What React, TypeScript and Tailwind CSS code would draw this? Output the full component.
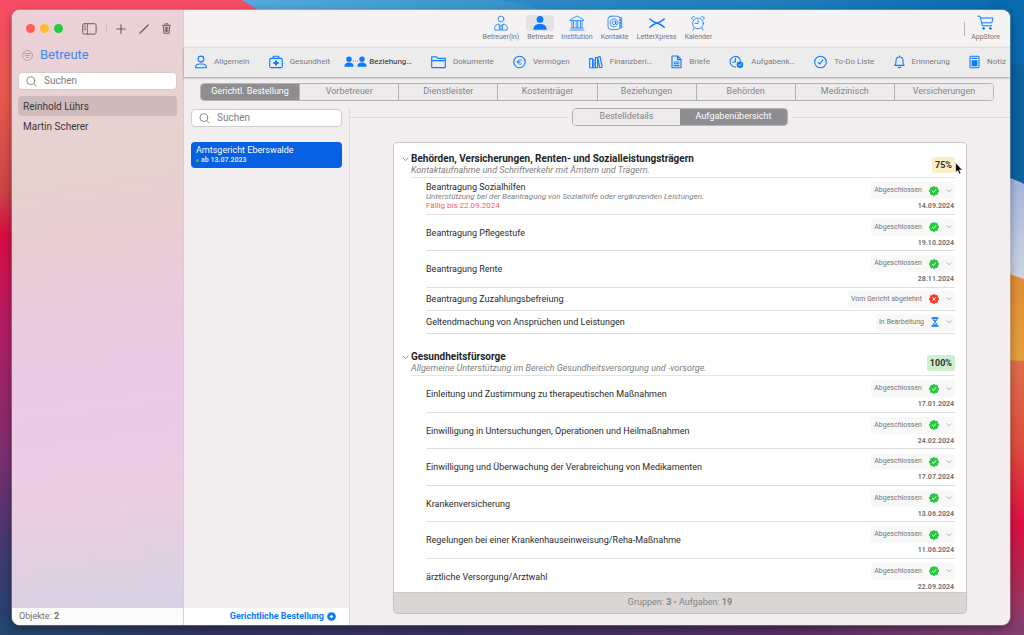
import { useState } from 'react';
import type { ReactNode } from 'react';

type Status = 'Abgeschlossen' | 'Vom Gericht abgelehnt' | 'In Bearbeitung';

type Task = {
  title: string;
  note?: string;
  due?: string;
  status: Status;
  date?: string;
};

type Group = {
  title: string;
  description: string;
  progress: string;
  badge: string;
  tasks: Task[];
};

const groups: Group[] = [
  {
    title: 'Behörden, Versicherungen, Renten- und Sozialleistungsträgern',
    description: 'Kontaktaufnahme und Schriftverkehr mit Ämtern und Trägern.',
    progress: '75%',
    badge: 'bg-[#fdeec6]',
    tasks: [
      {
        title: 'Beantragung Sozialhilfen',
        note: 'Unterstützung bei der Beantragung von Sozialhilfe oder ergänzenden Leistungen.',
        due: 'Fällig bis 22.09.2024',
        status: 'Abgeschlossen',
        date: '14.09.2024',
      },
      { title: 'Beantragung Pflegestufe', status: 'Abgeschlossen', date: '19.10.2024' },
      { title: 'Beantragung Rente', status: 'Abgeschlossen', date: '28.11.2024' },
      { title: 'Beantragung Zuzahlungsbefreiung', status: 'Vom Gericht abgelehnt' },
      { title: 'Geltendmachung von Ansprüchen und Leistungen', status: 'In Bearbeitung' },
    ],
  },
  {
    title: 'Gesundheitsfürsorge',
    description: 'Allgemeine Unterstützung im Bereich Gesundheitsversorgung und -vorsorge.',
    progress: '100%',
    badge: 'bg-[#cdefcd]',
    tasks: [
      { title: 'Einleitung und Zustimmung zu therapeutischen Maßnahmen', status: 'Abgeschlossen', date: '17.01.2024' },
      { title: 'Einwilligung in Untersuchungen, Operationen und Heilmaßnahmen', status: 'Abgeschlossen', date: '24.02.2024' },
      { title: 'Einwilligung und Überwachung der Verabreichung von Medikamenten', status: 'Abgeschlossen', date: '17.07.2024' },
      { title: 'Krankenversicherung', status: 'Abgeschlossen', date: '13.06.2024' },
      { title: 'Regelungen bei einer Krankenhauseinweisung/Reha-Maßnahme', status: 'Abgeschlossen', date: '11.06.2024' },
      { title: 'ärztliche Versorgung/Arztwahl', status: 'Abgeschlossen', date: '22.09.2024' },
    ],
  },
];

const statuses: Status[] = ['Abgeschlossen', 'Vom Gericht abgelehnt', 'In Bearbeitung'];

const categories = [
  'Gerichtl. Bestellung',
  'Vorbetreuer',
  'Dienstleister',
  'Kostenträger',
  'Beziehungen',
  'Behörden',
  'Medizinisch',
  'Versicherungen',
];

type IconProps = { w: number; h: number; stroke?: number; className?: string; children: ReactNode };

const Icon = ({ w, h, stroke = 1.1, className = '', children }: IconProps) => (
  <svg
    width={w}
    height={h}
    viewBox={`0 0 ${w} ${h}`}
    fill="none"
    stroke="currentColor"
    strokeWidth={stroke}
    strokeLinecap="round"
    strokeLinejoin="round"
    className={`shrink-0 ${className}`}
    aria-hidden="true"
  >
    {children}
  </svg>
);

const PersonSolid = ({ x = 0 }: { x?: number }) => (
  <g transform={`translate(${x} 0)`} fill="currentColor" stroke="none">
    <circle cx="5" cy="3.2" r="2.7" />
    <path d="M0.4 10.8 C0.4 7.4 2.4 6.4 5 6.4 S9.6 7.4 9.6 10.8 Z" />
  </g>
);

const apps = [
  {
    label: 'Betreuer(in)',
    icon: (
      <Icon w={14} h={16} stroke={0.8}>
        <circle cx="7" cy="4" r="2.9" />
        <path d="M0.8 14.6 V12.6 C0.8 10.6 2.6 9.4 4.8 9 L7 11.2 L9.2 9 C11.4 9.4 13.2 10.6 13.2 12.6 V14.6 Z M5 9.4 L5.6 14.4 M9 9.4 L8.4 14.4 M7 11.2 V14.4" />
      </Icon>
    ),
  },
  {
    label: 'Betreute',
    icon: (
      <Icon w={14} h={16}>
        <g fill="currentColor" stroke="none">
          <circle cx="7" cy="4.4" r="3.4" />
          <path d="M0.4 14.8 C0.4 10.4 3 9 7 9 S13.6 10.4 13.6 14.8 Z" />
        </g>
      </Icon>
    ),
  },
  {
    label: 'Institution',
    icon: (
      <Icon w={16} h={16} stroke={0.8}>
        <path d="M1.4 4.6 L8 1 L14.6 4.6 V5.6 H1.4 Z M2 13 H14 M1 15 H15 M3 5.8 V12.8 M4.6 5.8 V12.8 M7.2 5.8 V12.8 M8.8 5.8 V12.8 M11.4 5.8 V12.8 M13 5.8 V12.8" />
      </Icon>
    ),
  },
  {
    label: 'Kontakte',
    icon: (
      <Icon w={16} h={16} stroke={0.8}>
        <rect x="1" y="1.2" width="12" height="13.4" rx="3" />
        <circle cx="7" cy="7.8" r="1.8" />
        <path d="M8.8 6 V8.6 C8.8 10.2 11 10 11 7.8 A4 4 0 1 0 9.2 11.2" />
        <path d="M13 2.6 H14.8 V4.6 H13 M13 5.4 H14.8 V7.4 H13 M13 8.2 H14.8 V10.2 H13 M13 11 H14.8 V13 H13" />
      </Icon>
    ),
  },
  {
    label: 'LetterXpress',
    icon: (
      <Icon w={16} h={16} stroke={1.4}>
        <path d="M0.8 4 C4.2 6.6 6 8 8 8 S11.8 6.6 15.2 4 M0.8 12.2 C4.4 9.2 6 8.2 8 8.2 S11.6 9.2 15.2 12.2" />
      </Icon>
    ),
  },
  {
    label: 'Kalender',
    icon: (
      <Icon w={16} h={16} stroke={0.8}>
        <circle cx="8" cy="8.4" r="5.4" />
        <path d="M8 4.8 V8.4 H5 M2.2 4.4 C0.8 2.6 3 0.6 4.8 2 M13.8 4.4 C15.2 2.6 13 0.6 11.2 2 M4.2 12.6 L3 15 M11.8 12.6 L13 15" />
      </Icon>
    ),
  },
];

const sections = [
  {
    label: 'Allgemein',
    icon: (
      <Icon w={12} h={14}>
        <circle cx="6" cy="4" r="2.9" />
        <path d="M0.7 12.8 V12 C0.7 9.8 2.6 9 4.4 9 H7.6 C9.4 9 11.3 9.8 11.3 12 V12.8 Z" />
      </Icon>
    ),
  },
  {
    label: 'Gesundheit',
    icon: (
      <Icon w={14} h={14}>
        <rect x="0.7" y="3.4" width="12.6" height="9.2" rx="1.4" />
        <path d="M4.2 3.2 V1.2 H9.8 V3.2" />
        <path d="M7 5.4 V10.6 M4.4 8 H9.6" strokeWidth="2" strokeLinecap="butt" />
      </Icon>
    ),
  },
  {
    label: 'Beziehung…',
    icon: (
      <Icon w={23} h={12} className="-mx-[5px]">
        <PersonSolid />
        <PersonSolid x={13} />
        <path d="M8.6 5 H14" strokeWidth="0.9" strokeDasharray="0.9 1.5" strokeLinecap="butt" />
      </Icon>
    ),
  },
  {
    label: 'Dokumente',
    icon: (
      <Icon w={15} h={14}>
        <path d="M0.7 12 V1.8 H5.6 L7 3.4 H14.3 V12 Q14.3 12.6 13.7 12.6 H1.3 Q0.7 12.6 0.7 12 Z M0.7 5.6 H14.3" />
      </Icon>
    ),
  },
  {
    label: 'Vermögen',
    icon: (
      <Icon w={13} h={14}>
        <circle cx="6.5" cy="7" r="5.7" />
        <path d="M8.6 5.2 C7 3.8 5.1 4.8 5.1 7 S7 10.2 8.6 8.8 M4 6.4 H7 M4 7.7 H7" strokeWidth="0.7" />
      </Icon>
    ),
  },
  {
    label: 'Finanzberi…',
    icon: (
      <Icon w={14} h={14}>
        <path d="M0.7 3.6 H3.6 V12.8 H0.7 Z M3.6 5.2 H6.4 V12.8 H3.6 M6.4 2.6 V12.8 H8.6 V2.6 Z M8.6 2.2 L11 1.4 L13.2 12.2 L10.8 12.8 Z M4.9 7 V11" />
      </Icon>
    ),
  },
  {
    label: 'Briefe',
    icon: (
      <Icon w={11} h={14}>
        <path d="M1 1 H6.6 L10 4.4 V12.8 H1 Z M6.4 1.2 V4.6 H9.8 M3 7 H8 M3 8.8 H8 M3 10.6 H8" />
      </Icon>
    ),
  },
  {
    label: 'Aufgabenk…',
    icon: (
      <Icon w={15} h={14}>
        <path d="M11.6 6 A5.3 5.3 0 1 0 6.6 12 M6.4 3.4 V7 H3.6" />
        <circle cx="10.9" cy="9.8" r="3.3" fill="currentColor" stroke="none" />
        <path d="M9.5 9.9 L10.6 11 L12.4 8.8" stroke="#ececec" strokeWidth="0.8" />
      </Icon>
    ),
  },
  {
    label: 'To-Do Liste',
    icon: (
      <Icon w={13} h={14}>
        <circle cx="6.5" cy="7" r="5.8" />
        <path d="M4.2 7.4 L5.8 9 L8.8 5" />
      </Icon>
    ),
  },
  {
    label: 'Erinnerung',
    icon: (
      <Icon w={11} h={14}>
        <path d="M0.8 10.4 C2.2 9 2 7.6 2 5.8 C2 3.6 3.6 2 5.5 2 S9 3.6 9 5.8 C9 7.6 8.8 9 10.2 10.4 Z M4.2 12 C4.6 13 6.4 13 6.8 12 M5.5 0.9 V1.6" />
      </Icon>
    ),
  },
  {
    label: 'Notiz',
    icon: (
      <Icon w={11} h={14}>
        <rect x="1" y="1.2" width="9" height="11.6" rx="0.8" />
        <path d="M3 3.4 H8" />
        <path d="M2.6 5.2 H8.4 V11.2 H2.6 Z" fill="currentColor" stroke="none" />
      </Icon>
    ),
  },
];

const Wallpaper = () => (
  <svg className="absolute inset-0 -z-10 h-full w-full" viewBox="0 0 1024 635" preserveAspectRatio="none" aria-hidden="true">
    <defs>
      <linearGradient id="left" x1="0" y1="0" x2="0" y2="1">
        <stop offset="0" stopColor="#f74c64" />
        <stop offset="0.15" stopColor="#e8594f" />
        <stop offset="0.3" stopColor="#cb4648" />
        <stop offset="0.37" stopColor="#d90d42" />
        <stop offset="0.5" stopColor="#b71c63" />
        <stop offset="0.72" stopColor="#7a2f6e" />
        <stop offset="0.87" stopColor="#41396f" />
        <stop offset="1" stopColor="#20446f" />
      </linearGradient>
      <linearGradient id="sky" x1="0" y1="0" x2="1" y2="0">
        <stop offset="0" stopColor="#54a9dd" />
        <stop offset="0.4" stopColor="#3690c8" />
        <stop offset="1" stopColor="#0969ae" />
      </linearGradient>
      <linearGradient id="mist" x1="0" y1="0" x2="0" y2="1">
        <stop offset="0" stopColor="#9fb2de" />
        <stop offset="1" stopColor="#d3d9e4" />
      </linearGradient>
      <linearGradient id="amber" x1="0" y1="0" x2="0" y2="1">
        <stop offset="0" stopColor="#e18b35" />
        <stop offset="1" stopColor="#e5a13e" />
      </linearGradient>
      <linearGradient id="ember" x1="0" y1="0" x2="0" y2="1">
        <stop offset="0" stopColor="#dd7048" />
        <stop offset="0.3" stopColor="#e0503f" />
        <stop offset="0.6" stopColor="#dc0f41" />
        <stop offset="0.85" stopColor="#a0315c" />
        <stop offset="1" stopColor="#7d3f6f" />
      </linearGradient>
      <linearGradient id="dusk" x1="0" y1="0" x2="1" y2="0">
        <stop offset="0" stopColor="#24466f" />
        <stop offset="0.2" stopColor="#31345f" />
        <stop offset="0.45" stopColor="#3a3060" />
        <stop offset="0.75" stopColor="#532f62" />
        <stop offset="1" stopColor="#833f6c" />
      </linearGradient>
    </defs>
    <rect width="1024" height="635" fill="url(#left)" />
    <path d="M242 0 L260 11 H1024 V0 Z" fill="url(#sky)" />
    <path d="M498 0 C520 3 534 7 545 12 H780 C760 7 740 3 718 0 Z" fill="#1f7fbd" opacity="0.45" />
    <path d="M990 0 H1024 V190 H990 Z" fill="#0a6aae" />
    <path d="M990 62 L1024 65 V190 H990 Z" fill="#0d619f" />
    <path d="M990 171 Q1012 178 1024 184 V290 H990 Z" fill="url(#mist)" />
    <path d="M990 267 L1024 279 V370 H990 Z" fill="url(#amber)" />
    <path d="M990 359 L1024 361 V635 H990 Z" fill="url(#ember)" />
    <rect y="622" width="1024" height="13" fill="url(#dusk)" />
  </svg>
);

const SearchField = ({ id }: { id: string }) => (
  <label
    htmlFor={id}
    className="flex h-[18px] items-center gap-[7px] rounded-[4px] border border-[#d3cdce] bg-white px-[7px] text-[#7e7e80]"
  >
    <Icon w={11} h={11} stroke={0.9}>
      <circle cx="4.8" cy="4.6" r="3.9" />
      <path d="M7.6 7.4 L10.4 10.2" />
    </Icon>
    <input
      id={id}
      type="search"
      placeholder="Suchen"
      aria-label="Suchen"
      className="min-w-0 flex-1 text-[10px] leading-4 outline-none placeholder:text-[#7e7e80]"
    />
  </label>
);

const Sidebar = () => (
  <aside className="flex w-[172px] shrink-0 flex-col border-r border-[#d9cbd6] bg-linear-[172deg,#ecd1d8_0%,#e9d2d5_12%,#e6d3cc_25%,#e9cdd2_38%,#ebcae0_50%,#eacbe6_68%,#ebcee2_80%,#ded1e2_90%,#d5d3e4_100%]">
    <div className="flex h-[37px] items-center pr-3 pl-[14px] text-[#6b5a60]">
      <div className="flex gap-[5px]">
        <button type="button" aria-label="Schließen" className="size-[9px] rounded-full bg-[#fe5f57]" />
        <button type="button" aria-label="Minimieren" className="size-[9px] rounded-full bg-[#febc2e]" />
        <button type="button" aria-label="Vergrößern" className="size-[9px] rounded-full bg-[#28c840]" />
      </div>
      <div className="flex flex-1 items-center justify-end gap-[13px]">
        <button type="button" aria-label="Seitenleiste">
          <Icon w={15} h={12} stroke={1}>
            <rect x="0.7" y="0.7" width="13.4" height="10.4" rx="1.6" />
            <path d="M5.4 0.8 V11 M2.2 3 H3.8 M2.2 4.8 H3.8 M2.2 6.6 H3.8" strokeWidth="0.8" />
          </Icon>
        </button>
        <span className="-mx-1 h-[7px] w-px bg-[#cdb9be]" />
        <button type="button" aria-label="Hinzufügen">
          <Icon w={10} h={10}>
            <path d="M5 0.8 V9.2 M0.8 5 H9.2" />
          </Icon>
        </button>
        <button type="button" aria-label="Bearbeiten">
          <Icon w={10} h={10} stroke={1.2}>
            <path d="M0.8 9.2 L9.2 1" />
          </Icon>
        </button>
        <button type="button" aria-label="Löschen">
          <Icon w={9} h={11} stroke={0.9}>
            <path d="M0.6 2.4 H8.4 M3 2.2 V0.8 H6 V2.2 M1.3 2.6 L1.8 10.3 H7.2 L7.7 2.6 M3.2 4.2 V8.8 M4.5 4.2 V8.8 M5.8 4.2 V8.8" />
          </Icon>
        </button>
      </div>
    </div>
    <div className="flex h-4 items-center gap-[7px] pl-[10px]">
      <button type="button" aria-label="Filter" className="text-[#a08c92]">
        <Icon w={11} h={11} stroke={0.7}>
          <circle cx="5.5" cy="5.5" r="5" />
          <path d="M2.6 3.5 H8.4 M3.4 5.5 H7.6 M4.4 7.5 H6.6" />
        </Icon>
      </button>
      <h1 className="text-[13px] text-[#3e88f3]">Betreute</h1>
    </div>
    <div className="mt-[9px] px-[6px]">
      <SearchField id="search-clients" />
    </div>
    <ul className="mt-[6px] flex-1 px-[6px] text-[10px] text-[#3c3538]">
      <li>
        <button type="button" className="h-5 w-full rounded-[4px] bg-[#cfbabb] px-[5px] text-left">
          Reinhold Lührs
        </button>
      </li>
      <li>
        <button type="button" className="h-5 w-full rounded-[4px] px-[5px] text-left">
          Martin Scherer
        </button>
      </li>
    </ul>
    <div className="flex h-[17px] items-center bg-[#fcfbfc] pl-[7px] text-[9px] text-[#6f6f71]">
      <p>
        Objekte: <b>2</b>
      </p>
    </div>
  </aside>
);

const Header = () => (
  <header className="grid h-[37px] grid-cols-[1fr_auto_1fr] items-center bg-[#f5f2f3] text-[7px] text-[#747375]">
    <nav className="col-start-2 flex gap-[7px] pl-[2px]">
      {apps.map((app) => (
        <a key={app.label} href="#" className="flex flex-col items-center">
          <span
            className={`flex h-4 items-center rounded-[4px] px-[7px] text-[#0a7aff] ${app.label === 'Betreute' ? 'bg-[#e6e3e4]' : ''}`}
          >
            {app.icon}
          </span>
          <span className="leading-3">{app.label}</span>
        </a>
      ))}
    </nav>
    <div className="flex items-center justify-end gap-[6px] pr-[10px]">
      <span className="h-[14px] w-px bg-[#b5b3b4]" />
      <a href="#" className="flex flex-col items-center">
        <Icon w={17} h={16} stroke={1} className="text-[#0a7aff]">
          <path d="M0.8 1.2 H3 L5.4 10.8 H14.6 M3.4 3 H16 L14.8 7.8 H4.8" />
          <circle cx="6.6" cy="13.4" r="0.9" fill="currentColor" />
          <circle cx="13.4" cy="13.4" r="0.9" fill="currentColor" />
        </Icon>
        <span className="leading-3">AppStore</span>
      </a>
    </div>
  </header>
);

const SectionBar = () => (
  <nav className="z-10 flex h-[30px] items-center justify-between border-t border-[#e0dddd] bg-[#ececec] pr-1 pb-px pl-[11px] text-[8px] text-[#7c7b7d] shadow-[0_1px_2px_rgba(0,0,0,0.35)]">
    {sections.map((section) => (
      <a
        key={section.label}
        href="#"
        className={`flex items-center gap-[7px] whitespace-nowrap ${section.label === 'Beziehung…' ? 'text-[#2b2b2b]' : ''}`}
      >
        <span className="text-[#0a7aff]">{section.icon}</span>
        {section.label}
      </a>
    ))}
  </nav>
);

const StatusIcon = ({ status }: { status: Status }) => {
  if (status === 'In Bearbeitung') {
    return (
      <Icon w={8} h={10} stroke={1} className="text-[#0a7aff]">
        <path d="M1 1 H7 M1 9 H7" strokeWidth="1.4" />
        <path d="M2 1.4 C2 4 3.8 4.2 3.8 5 S2 6 2 8.6 H6 C6 6 4.2 5.8 4.2 5 S6 4 6 1.4 Z" />
        <path d="M2.6 2.8 H5.4 L4 4.6 Z M2.4 8.4 L4 6.8 L5.6 8.4 Z" fill="currentColor" stroke="none" />
      </Icon>
    );
  }
  const done = status === 'Abgeschlossen';
  return (
    <Icon w={10} h={10} stroke={1} className={done ? 'text-[#28c940]' : 'text-[#ff3b30]'}>
      <path
        d="M5 0.5 L6.4 1.3 L8.1 1.4 L8.6 3.1 L9.6 5 L8.6 6.7 L8.1 8.4 L6.4 8.7 L5 9.6 L3.5 8.7 L1.8 8.4 L1.4 6.7 L0.4 5 L1.4 3.2 L1.9 1.5 L3.6 1.3 Z"
        fill="currentColor"
      />
      <path d={done ? 'M3.3 5.2 L4.5 6.5 L6.7 3.7' : 'M3.6 3.6 L6.4 6.4 M6.4 3.6 L3.6 6.4'} stroke="#fff" strokeWidth="0.9" />
    </Icon>
  );
};

const TaskRow = ({ task }: { task: Task }) => {
  const [status, setStatus] = useState<Status>(task.status);

  return (
    <li
      className={`flex items-center justify-between border-b border-[#dedede] ${task.date ? 'h-[37px] even:h-9' : 'h-[23px]'}`}
    >
      <div>
        <h3 className="text-[9px] leading-[10px] text-[#2a2a2a]">{task.title}</h3>
        {task.note && <p className="text-[8px] leading-[9px] text-[#7e7e80] italic">{task.note}</p>}
        {task.due && <p className="text-[8px] leading-[9px] text-[#fb5b62]">{task.due}</p>}
      </div>
      <div className="flex flex-col items-end gap-[3px]">
        <div className="flex h-[17px] items-center gap-[7px] rounded-[3px] bg-[#f8f8f8] px-[3px] text-[7px] text-[#747476]">
          <select
            aria-label={`Status: ${task.title}`}
            value={status}
            onChange={(e) => setStatus(e.target.value as Status)}
            className="field-sizing-content appearance-none outline-none"
          >
            {statuses.map((s) => (
              <option key={s}>{s}</option>
            ))}
          </select>
          <StatusIcon status={status} />
          <Icon w={6} h={4} stroke={0.7} className="text-[#8c8c8e]">
            <path d="M1 0.8 L3 2.8 L5 0.8" />
          </Icon>
        </div>
        {task.date && <time className="px-[1px] text-[7px] leading-[8px] font-bold text-[#747476]">{task.date}</time>}
      </div>
    </li>
  );
};

const TaskGroup = ({ group }: { group: Group }) => (
  <section>
    <div className="flex pl-[8px]">
      <button type="button" aria-label="Gruppe einklappen" className="flex h-3 w-[9px] items-center">
        <Icon w={7} h={5} stroke={0.9} className="text-[#8a8a8c]">
          <path d="M1 1 L3.5 3.6 L6 1" />
        </Icon>
      </button>
      <div className="flex flex-1 items-center justify-between border-b border-[#e4e4e4] pb-px">
        <div>
          <h2 className="text-[10px] leading-3 font-bold text-[#1f1f1f]">{group.title}</h2>
          <p className="text-[9px] leading-[11px] text-[#7e7e80] italic">{group.description}</p>
        </div>
        <span className={`rounded-[3px] px-[3px] text-[9px] leading-4 font-bold text-[#33332c] ${group.badge}`}>{group.progress}</span>
      </div>
    </div>
    <ul className="pl-8">
      {group.tasks.map((task) => (
        <TaskRow key={task.title} task={task} />
      ))}
    </ul>
  </section>
);

const Detail = () => (
  <main className="flex min-w-0 flex-1 flex-col pb-[11px]">
    <div className="flex items-center gap-[5px] text-[9px]">
      <span className="h-px flex-1 bg-[#dcd9da]" />
      <div className="flex h-[18px] w-[216px] overflow-hidden rounded-[4px] border border-[#b0afb1]">
        <button type="button" className="flex-1 bg-[#edebec] text-[#858487]">
          Bestelldetails
        </button>
        <button type="button" className="flex-1 bg-[#8e8d92] text-white">
          Aufgabenübersicht
        </button>
      </div>
      <span className="h-px flex-1 bg-[#dcd9da]" />
    </div>
    <div className="mx-[43px] mt-4 flex min-h-0 flex-1 flex-col overflow-hidden rounded-[4px] border border-[#c4c2c3] bg-white">
      <div className="flex min-h-0 flex-1 flex-col gap-[17px] overflow-hidden pt-[10px] pr-[11px]">
        {groups.map((group) => (
          <TaskGroup key={group.title} group={group} />
        ))}
      </div>
      <footer className="flex h-[21px] shrink-0 items-center justify-center border-t border-[#cbc8c8] bg-[#d9d6d5] text-[9px] text-[#858486]">
        <p>
          Gruppen: <b>3</b> • Aufgaben: <b>19</b>
        </p>
      </footer>
    </div>
  </main>
);

const Appointments = () => (
  <div className="flex w-[166px] shrink-0 flex-col border-r border-[#dedbdc]">
    <div className="flex-1 px-[7px] pt-px">
      <SearchField id="search-appointments" />
      <button
        type="button"
        className="mt-[15px] flex w-full flex-col items-start rounded-[4px] bg-[#0561e2] px-[5px] py-[3px] text-left text-white"
      >
        <span className="text-[9px] leading-[10px]">Amtsgericht Eberswalde</span>
        <span className="flex items-center gap-[2px] text-[7px] leading-[10px] font-bold text-[#cfe0fa]">
          <span className="size-[3px] rounded-full bg-[#28c940]" />
          ab 13.07.2023
        </span>
      </button>
    </div>
    <div className="flex h-[17px] items-center justify-end bg-white pr-[13px]">
      <button type="button" className="flex items-center gap-[3px] text-[9px] font-bold text-[#0a7aff]">
        Gerichtliche Bestellung
        <Icon w={9} h={9} stroke={1}>
          <circle cx="4.5" cy="4.5" r="4.3" fill="currentColor" stroke="none" />
          <path d="M4.5 3.4 V5.6 M3.4 4.5 H5.6" stroke="#fff" strokeWidth="1.3" />
        </Icon>
      </button>
    </div>
  </div>
);

const App = () => {
  const [category, setCategory] = useState(categories[0]);

  return (
    <div className="relative isolate flex h-screen overflow-hidden pt-[10px] pr-[14px] pb-[10px] pl-3 font-[Roboto,sans-serif]">
      <Wallpaper />
      <div className="flex min-w-0 flex-1 overflow-hidden rounded-[8px] bg-[#f2eeef] shadow-[0_0_0_1px_rgba(255,255,255,0.25),0_3px_10px_rgba(0,0,0,0.4)]">
        <Sidebar />
        <div className="flex min-w-0 flex-1 flex-col">
          <Header />
          <SectionBar />
          <div className="px-4 pt-[6px] text-[9px]">
            <div className="flex h-[18px] divide-x divide-[#b3b2b4] overflow-hidden rounded-[4px] border border-[#b3b2b4]">
              {categories.map((item) => (
                <button
                  key={item}
                  type="button"
                  onClick={() => setCategory(item)}
                  className={`flex-1 whitespace-nowrap ${item === category ? 'bg-[#8e8d92] text-white' : 'bg-[#edebec] text-[#858487]'}`}
                >
                  {item}
                </button>
              ))}
            </div>
          </div>
          <div className="mt-[7px] flex min-h-0 flex-1">
            <Appointments />
            <Detail />
          </div>
        </div>
      </div>
      {/* mouse pointer */}
      <svg className="absolute top-[162px] left-[955px]" width="8" height="13" viewBox="0 0 8 13" aria-hidden="true">
        <path d="M0.6 0.8 V10.4 L2.7 8.5 L4.2 12 L5.9 11.3 L4.4 8 H7.4 Z" fill="#000" stroke="#fff" strokeWidth="0.6" />
      </svg>
    </div>
  );
};

export default App;
